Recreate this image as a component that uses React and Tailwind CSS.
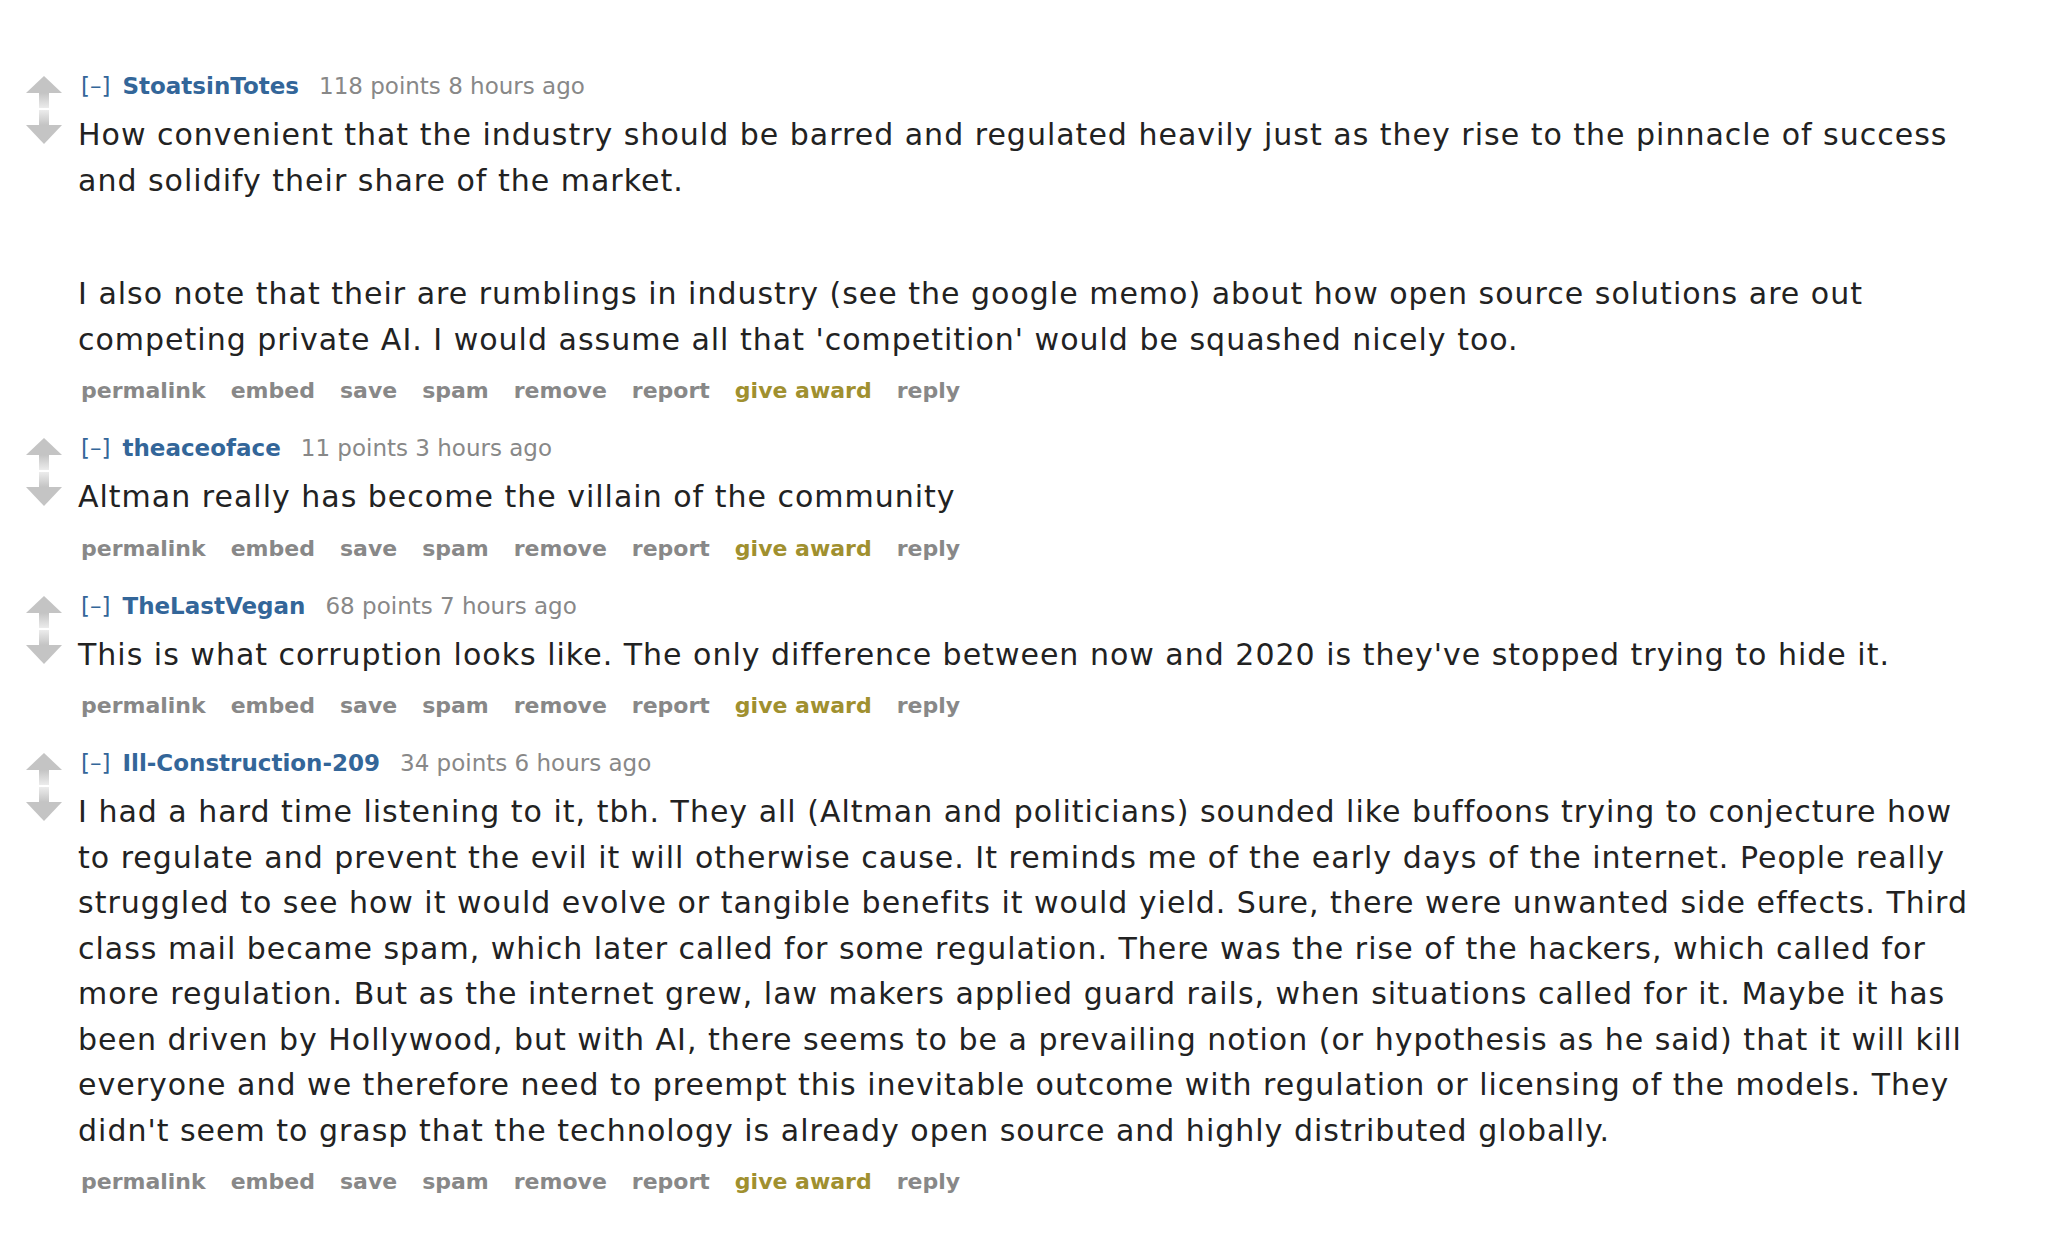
import React from 'react';

const comments = [
  {
    author: 'StoatsinTotes',
    points: 118,
    age: '8 hours ago',
    paragraphs: [
      'How convenient that the industry should be barred and regulated heavily just as they rise to the pinnacle of success and solidify their share of the market.',
      "I also note that their are rumblings in industry (see the google memo) about how open source solutions are out competing private AI. I would assume all that 'competition' would be squashed nicely too.",
    ],
  },
  {
    author: 'theaceoface',
    points: 11,
    age: '3 hours ago',
    paragraphs: ['Altman really has become the villain of the community'],
  },
  {
    author: 'TheLastVegan',
    points: 68,
    age: '7 hours ago',
    paragraphs: [
      "This is what corruption looks like. The only difference between now and 2020 is they've stopped trying to hide it.",
    ],
  },
  {
    author: 'Ill-Construction-209',
    points: 34,
    age: '6 hours ago',
    paragraphs: [
      "I had a hard time listening to it, tbh. They all (Altman and politicians) sounded like buffoons trying to conjecture how to regulate and prevent the evil it will otherwise cause. It reminds me of the early days of the internet. People really struggled to see how it would evolve or tangible benefits it would yield. Sure, there were unwanted side effects. Third class mail became spam, which later called for some regulation. There was the rise of the hackers, which called for more regulation. But as the internet grew, law makers applied guard rails, when situations called for it. Maybe it has been driven by Hollywood, but with AI, there seems to be a prevailing notion (or hypothesis as he said) that it will kill everyone and we therefore need to preempt this inevitable outcome with regulation or licensing of the models. They didn't seem to grasp that the technology is already open source and highly distributed globally.",
    ],
  },
];

const buttons = ['permalink', 'embed', 'save', 'spam', 'remove', 'report', 'give award', 'reply'];

// vote arrows: solid head, stem fading out toward the middle
function UpArrow() {
  return (
    <svg width="36" height="33" viewBox="0 0 36 33">
      <defs>
        <linearGradient id="upStem" x1="0" y1="0" x2="0" y2="1">
          <stop offset="0" stopColor="#c4c4c4" />
          <stop offset="1" stopColor="#ececec" />
        </linearGradient>
      </defs>
      <polygon points="18,0 36,17 0,17" fill="#c4c4c4" />
      <rect x="13" y="17" width="10" height="15" fill="url(#upStem)" />
    </svg>
  );
}

function DownArrow() {
  return (
    <svg width="36" height="35" viewBox="0 0 36 35">
      <defs>
        <linearGradient id="downStem" x1="0" y1="0" x2="0" y2="1">
          <stop offset="0" stopColor="#ececec" />
          <stop offset="1" stopColor="#c4c4c4" />
        </linearGradient>
      </defs>
      <rect x="13" y="1" width="10" height="15" fill="url(#downStem)" />
      <polygon points="0,16 36,16 18,35" fill="#c4c4c4" />
    </svg>
  );
}

function Comment({ comment, first }) {
  return (
    <div className={first ? 'flex' : 'flex mt-[29px]'}>
      <div className="w-[36px] ml-[26px] mr-[16px] pt-[4px] flex flex-col shrink-0">
        <UpArrow />
        <DownArrow />
      </div>
      <div className="w-[1900px]">
        <p className="text-[23px] leading-[28px] text-[#888] flex items-baseline">
          <span className="text-[#369] ml-[3px]">[–]</span>
          <span className="text-[#369] font-bold ml-[12px]">{comment.author}</span>
          <span className="ml-[20px]">{comment.points} points {comment.age}</span>
        </p>
        <div className="mt-[12px] text-[30px] leading-[45.5px] tracking-[1px] text-[#222]">
          {comment.paragraphs.map((p, i) => (
            <p key={i} className={i > 0 ? 'mt-[68px]' : ''}>
              {p}
            </p>
          ))}
        </div>
        <ul className="mt-[15px] flex gap-[25px] text-[22px] leading-[28px] font-bold text-[#888] pl-[3px]">
          {buttons.map((b) => (
            <li key={b} className={b === 'give award' ? 'text-[#a0902f]' : ''}>
              {b}
            </li>
          ))}
        </ul>
      </div>
    </div>
  );
}

export default function App() {
  return (
    <div className="min-h-screen bg-white pt-[72px] font-['DejaVu_Sans',Verdana,sans-serif]">
      {comments.map((c, i) => (
        <Comment key={c.author} comment={c} first={i === 0} />
      ))}
    </div>
  );
}
